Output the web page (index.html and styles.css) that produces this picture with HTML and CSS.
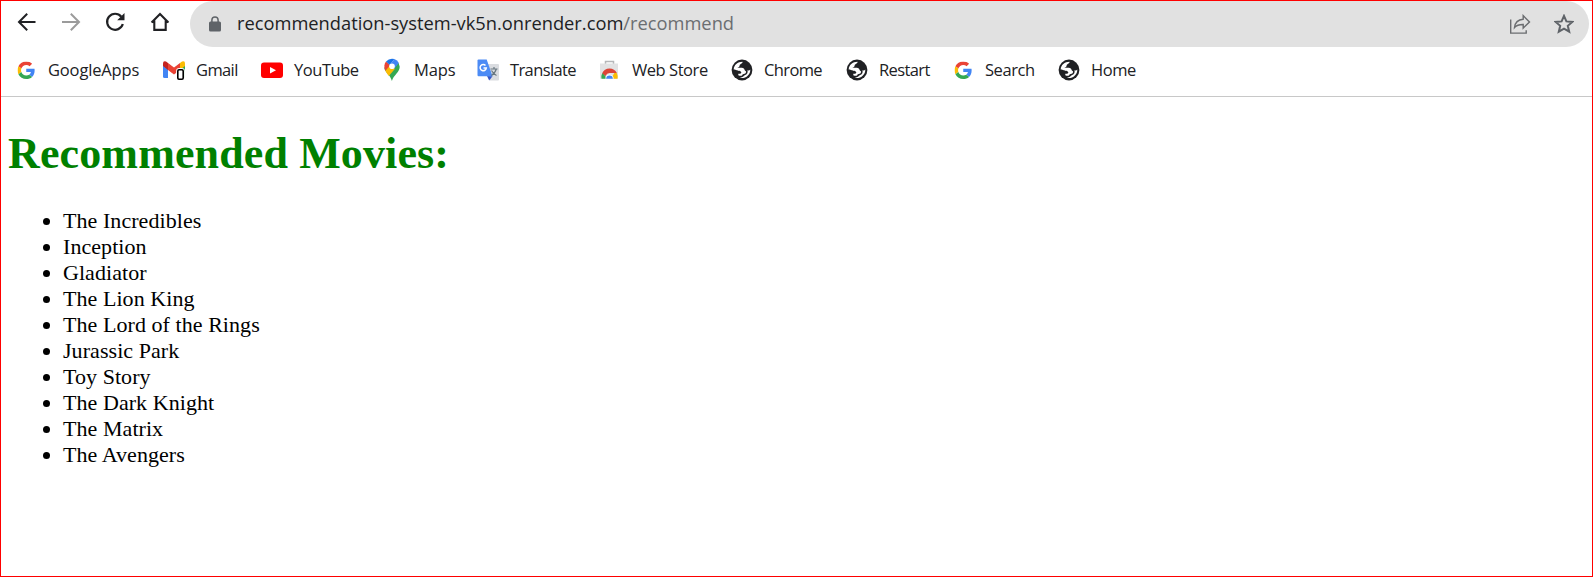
FILE: index.html
```html
<!DOCTYPE html>
<html lang="en">
<head>
<meta charset="utf-8">
<title>Recommended Movies</title>
<link rel="stylesheet" href="styles.css">
</head>
<body>
<svg class="defs" width="0" height="0" aria-hidden="true">
  <symbol id="google" viewBox="0 0 48 48">
    <path fill="#EA4335" d="M24 9.5c3.54 0 6.71 1.22 9.21 3.6l6.85-6.85C35.9 2.38 30.47 0 24 0 14.62 0 6.51 5.38 2.56 13.22l7.98 6.19C12.43 13.72 17.74 9.5 24 9.5z"/>
    <path fill="#4285F4" d="M46.98 24.55c0-1.57-.15-3.09-.38-4.55H24v9.02h12.94c-.58 2.96-2.26 5.48-4.78 7.18l7.73 6c4.51-4.18 7.09-10.36 7.09-17.65z"/>
    <path fill="#FBBC05" d="M10.53 28.59A14.5 14.5 0 0 1 9.77 24c0-1.6.27-3.14.76-4.59l-7.98-6.19A24 24 0 0 0 0 24c0 3.88.92 7.54 2.56 10.78z"/>
    <path fill="#34A853" d="M24 48c6.48 0 11.93-2.13 15.89-5.81l-7.73-6c-2.15 1.45-4.92 2.3-8.16 2.3-6.26 0-11.57-4.22-13.47-9.91l-7.98 6.19C6.51 42.62 14.62 48 24 48z"/>
  </symbol>
  <symbol id="globe" viewBox="0 0 22 22">
    <circle cx="11" cy="11" r="10.4" fill="#202124"/>
    <path fill="#fff" d="M2.700 10.400C2.900 6 6.500 2.700 11.600 2.700C11.600 4.700 9 4.700 8.700 6.300C8.500 7.800 7.800 8.400 6.200 8.500C8.500 9 10.500 8.500 12 9C14 9.700 13 11.300 14.500 12C16 12.800 14.500 15.300 11.700 15.200C11.300 17 9.500 17.300 7.300 16.300V14.800C9 15 10.300 14.600 10.300 13.200C9.800 12 8 12.300 7 11.600C5.600 10.600 4.300 11.200 2.700 10.400Z"/>
    <path fill="#fff" d="M19.300 10.500C19.500 16 14.500 20 8.800 18.900C11.800 18.400 12.500 17 13.700 16.300C16.200 15.300 17.300 13.300 16.300 11.200C17.500 11.900 18.500 11.500 19.300 10.500Z"/>
  </symbol>
</svg>
<div class="window">
  <header class="browser">
    <div class="toolbar">
      <nav class="nav">
        <svg width="20" height="20" viewBox="0 0 20 20" fill="none" stroke="#202124" stroke-width="2"><path d="M19.500 10H3.500M11.200 1.800 3 10l8.200 8.200"/></svg>
        <svg width="20" height="20" viewBox="0 0 20 20" fill="none" stroke="#9b9b9b" stroke-width="2"><path d="M1 10h16.500M9.800 1.800 18 10l-8.200 8.200"/></svg>
        <svg width="20" height="20" viewBox="0 0 20 20" fill="none" stroke="#202124" stroke-width="2.200"><path d="M16.300 4.700A8 8 0 1 0 17.800 12"/><path d="M19.500 1v7.300h-7.300z" fill="#202124" stroke="none"/></svg>
        <svg width="20" height="20" viewBox="0 0 20 20" fill="none" stroke="#202124" stroke-width="2.100"><path d="M1.600 10.400 10 2l8.400 8.400M4.300 8.500v9.400h11.400V8.500M1.600 9.900h3.300M15 9.900h3.400"/></svg>
      </nav>
      <div class="address">
        <svg class="lock" width="12" height="16" viewBox="0 0 12 16"><rect y="5.500" width="12" height="10" rx="1.500" fill="#5f6368"/><path d="M2.900 6V4a3.100 3.100 0 0 1 6.200 0v2" fill="none" stroke="#5f6368" stroke-width="1.500"/></svg>
        <div class="url">recommendation-system-vk5n.onrender.com<span class="path">/recommend</span></div>
        <svg class="share" width="22" height="21" viewBox="0 0 22 21" fill="none" stroke="#6b6d70" stroke-width="1.400"><path d="M1.700 5.500v13.600h15.500v-2.800"/><path d="M5.500 13.600C6 8.800 9 5.500 14.200 5.200V1.600L20.500 8l-6.300 6.100v-3.600c-3.800-.1-6.400.6-8.700 3.100z"/></svg>
        <svg class="star" width="20" height="20" viewBox="0 0 20 20" fill="none" stroke="#5f6368" stroke-width="2"><path d="m10 1.900 2.400 5.500 6 .5-4.600 3.900 1.400 5.900-5.200-3.100-5.200 3.100 1.400-5.900-4.600-3.900 6-.5z"/></svg>
      </div>
    </div>
    <div class="bookmarks">
      <a class="bookmark"><svg width="22" height="22"><use href="#google" x="2.500" y="2.500" width="17.500" height="17.500"/></svg><span class="label wide">GoogleApps</span></a>
      <a class="bookmark"><svg width="22" height="22" viewBox="0 0 22 22"><path fill="#4285F4" d="M0 4.500 5 8v11H1.500Q0 19 0 17.500z"/><path fill="#34A853" d="M17 8l5-3v12.500q0 1.500-1.500 1.500H17z"/><path fill="#FBBC04" d="M17 4l2-1.500q3-1.200 3 2V7l-5 4z"/><path fill="#C5221F" d="M0 4.500Q0 1.500 3 2.500L5 4v7L0 7z"/><path fill="#EA4335" d="m5 4 6 4.500L17 4v7l-6 4.500L5 11z"/><rect x="14.800" y="10.800" width="5.400" height="9.400" rx="1.500" fill="#fff" stroke="#fff" stroke-width="3.400"/><rect x="14.800" y="10.800" width="5.400" height="9.400" rx="1.200" fill="#fff" stroke="#000" stroke-width="1.600"/></svg><span class="label narrow">Gmail</span></a>
      <a class="bookmark"><svg width="22" height="22" viewBox="0 0 22 22"><rect y="3.500" width="22" height="15.500" rx="3" fill="#f00"/><path fill="#fff" d="m9 8 6 3.200-6 3.300z"/></svg><span class="label">YouTube</span></a>
      <a class="bookmark"><svg width="22" height="24" viewBox="0 0 22 24"><path fill="#34A853" d="M3.300 9.500C3.500 14 9.600 17 10.900 23c1.500-6 7.800-8.500 7.800-14.300L17.600 5z"/><path fill="#FBBC04" d="m4.300 12.500 5-6.100 4.700 4.300-6.200 7.200Q5 14.500 4.300 12.500z"/><path fill="#EA4335" d="m5 3.600 4.300 3.700-5 5.500C2.800 9.500 3 6 5 3.600z"/><path fill="#1A73E8" d="M5 3.600Q7.500.8 11 .7L13.400 1 8.700 7z"/><path fill="#4285F4" d="M13.400 1Q16.300 2 17.900 5L13 11 9 6.500z"/><circle cx="11" cy="8.300" r="2.800" fill="#fff"/></svg><span class="label wide">Maps</span></a>
      <a class="bookmark"><svg width="22" height="22" viewBox="0 0 22 22"><path fill="#dadce0" d="M9 5h12q1 0 1 1v14.500q0 1-1 1H13z"/><path fill="#3557c9" d="m10 17 5.500.2-3.300 4.300z"/><path fill="#4c8bf5" d="M1.500.5h8.200l5.800 16.700H1.500Q.5 17.200.5 16V1.500q0-1 1-1z"/><path fill="none" stroke="#fff" stroke-width="1.500" d="M8.500 6.500A3.100 3.100 0 1 0 9.300 9H6.500"/><path fill="none" stroke="#687780" stroke-width="1.200" d="M13.500 10h7M17 8v2M19.300 10q-1.300 4.500-5 6.500M14.500 11.500q2 3.500 5 5"/></svg><span class="label narrow">Translate</span></a>
      <a class="bookmark"><svg class="store" width="22" height="22" viewBox="0 0 22 22"><path fill="none" stroke="#b5b7b9" stroke-width="1.500" d="M7.500 5V2.500h8V5"/><path fill="#e1e2e3" d="M2 4.500h18v15.200H2z"/><path fill="#34A853" d="M3.500 19.700q-.7-4.200 1.500-6l4 6z"/><path fill="#FBBC04" d="M13 19.700l3.500-6h2.200q1.300 2.800.8 6z"/><path fill="#DB4437" d="M4.200 14.200q2-4.700 7.300-4.700 5.200 0 7.300 4.600h-7.300q-2.700 0-4 3z"/><path fill="#fff" d="M7.300 19.700a4.200 4.200 0 0 1 8.400 0z"/><path fill="#4285F4" d="M8.200 19.700a3.300 3.300 0 0 1 6.600 0z"/></svg><span class="label">Web Store</span></a>
      <a class="bookmark"><svg width="22" height="22"><use href="#globe"/></svg><span class="label narrow">Chrome</span></a>
      <a class="bookmark"><svg width="22" height="22"><use href="#globe"/></svg><span class="label narrow">Restart</span></a>
      <a class="bookmark"><svg width="22" height="22"><use href="#google" x="2.500" y="2.500" width="17.500" height="17.500"/></svg><span class="label">Search</span></a>
      <a class="bookmark"><svg width="22" height="22"><use href="#globe"/></svg><span class="label">Home</span></a>
    </div>
  </header>
  <main class="page">
    <h1 class="title">Recommended Movies:</h1>
    <ul class="movies">
      <li>The Incredibles</li>
      <li>Inception</li>
      <li>Gladiator</li>
      <li>The Lion King</li>
      <li>The Lord of the Rings</li>
      <li>Jurassic Park</li>
      <li>Toy Story</li>
      <li>The Dark Knight</li>
      <li>The Matrix</li>
      <li>The Avengers</li>
    </ul>
  </main>
</div>
</body>
</html>
```
FILE: styles.css
```css
* { box-sizing: border-box; }
body { margin: 0; background: #fff; }
.defs { display: none; }
.window {
  height: 577px;
  border: 1px solid #f00;
  overflow: hidden;
  font-family: "Open Sans", "Noto Sans", sans-serif;
  color: #202124;
}
.browser { height: 96px; border-bottom: 1px solid #c8c8c8; }
.toolbar { display: flex; height: 46px; }
.nav { display: flex; gap: 24.5px; width: 189px; padding: 11px 0 0 15px; }
.nav svg { flex: none; }
.address {
  display: flex;
  align-items: center;
  width: 1399px;
  height: 46px;
  padding: 0 15px 0 19px;
  border-radius: 23px;
  background: #e1e1e1;
}
.lock { margin-right: 16px; }
.url { flex: 1; padding-bottom: 2px; font-size: 18.3px; line-height: 42px; white-space: nowrap; }
.path { color: #6b6e71; }
.share { margin-right: 23px; }
.bookmarks {
  display: grid;
  grid-template-columns: 148px 98px 120px 96px 122px 132px 115px 106px 106px 100px;
  height: 46px;
  padding-left: 14px;
}
.bookmark { display: flex; align-items: center; gap: 11px; font-size: 16.5px; white-space: nowrap; }
.bookmark svg { flex: none; }
.store { margin: 0 1px 0 -1px; }
.label { padding-bottom: 2px; letter-spacing: -0.45px; }
.label.wide { letter-spacing: -0.15px; }
.label.narrow { letter-spacing: -0.62px; }
.page { font-family: "Liberation Serif", "Times New Roman", serif; color: #000; padding: 0 7px; }
.title { margin: 31px 0 0; font-size: 44px; line-height: 52px; letter-spacing: 0.13px; color: green; }
.movies { margin: 28px 0 0; padding-left: 55px; font-size: 22px; line-height: 26px; letter-spacing: 0.06px; }
```
